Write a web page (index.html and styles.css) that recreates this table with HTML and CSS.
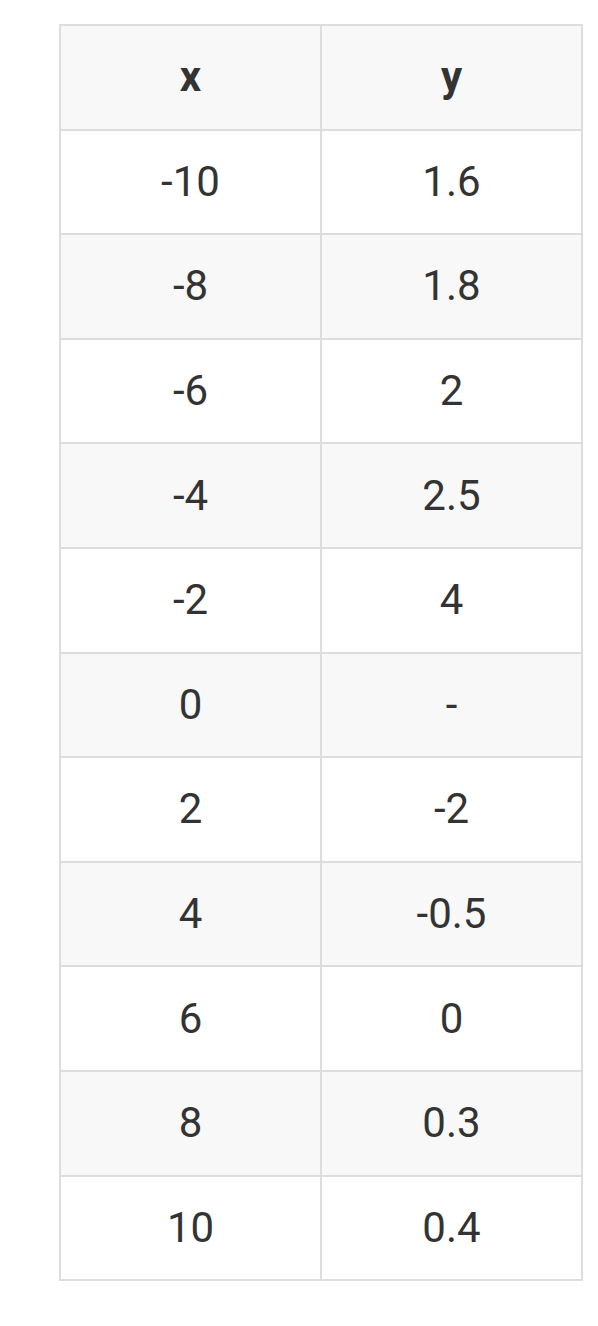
FILE: index.html
```html
<!DOCTYPE html>
<html>
<head>
<meta charset="utf-8">
<link rel="stylesheet" href="styles.css">
</head>
<body>
<table class="data">
  <thead>
    <tr><th>x</th><th>y</th></tr>
  </thead>
  <tbody>
    <tr><td>-10</td><td>1.6</td></tr>
    <tr><td>-8</td><td>1.8</td></tr>
    <tr><td>-6</td><td>2</td></tr>
    <tr><td>-4</td><td>2.5</td></tr>
    <tr><td>-2</td><td>4</td></tr>
    <tr><td>0</td><td>-</td></tr>
    <tr><td>2</td><td>-2</td></tr>
    <tr><td>4</td><td>-0.5</td></tr>
    <tr><td>6</td><td>0</td></tr>
    <tr><td>8</td><td>0.3</td></tr>
    <tr><td>10</td><td>0.4</td></tr>
  </tbody>
</table>
</body>
</html>
```

FILE: styles.css
```css
html, body {
  margin: 0;
  padding: 0;
  background: #ffffff;
}
body {
  padding: 24px 0 0 59px;
  font-family: Roboto, "Liberation Sans", sans-serif;
  color: #333333;
}
.data {
  border-collapse: collapse;
  width: 524px;
  table-layout: fixed;
}
.data th,
.data td {
  border: 2px solid #dddddd;
  height: 102.6px;
  padding: 0;
  text-align: center;
  vertical-align: middle;
  font-size: 42px;
  line-height: 1;
}
.data th {
  font-weight: 700;
  background: #f8f8f8;
}
.data tbody tr:nth-child(even) td {
  background: #f8f8f8;
}
```
